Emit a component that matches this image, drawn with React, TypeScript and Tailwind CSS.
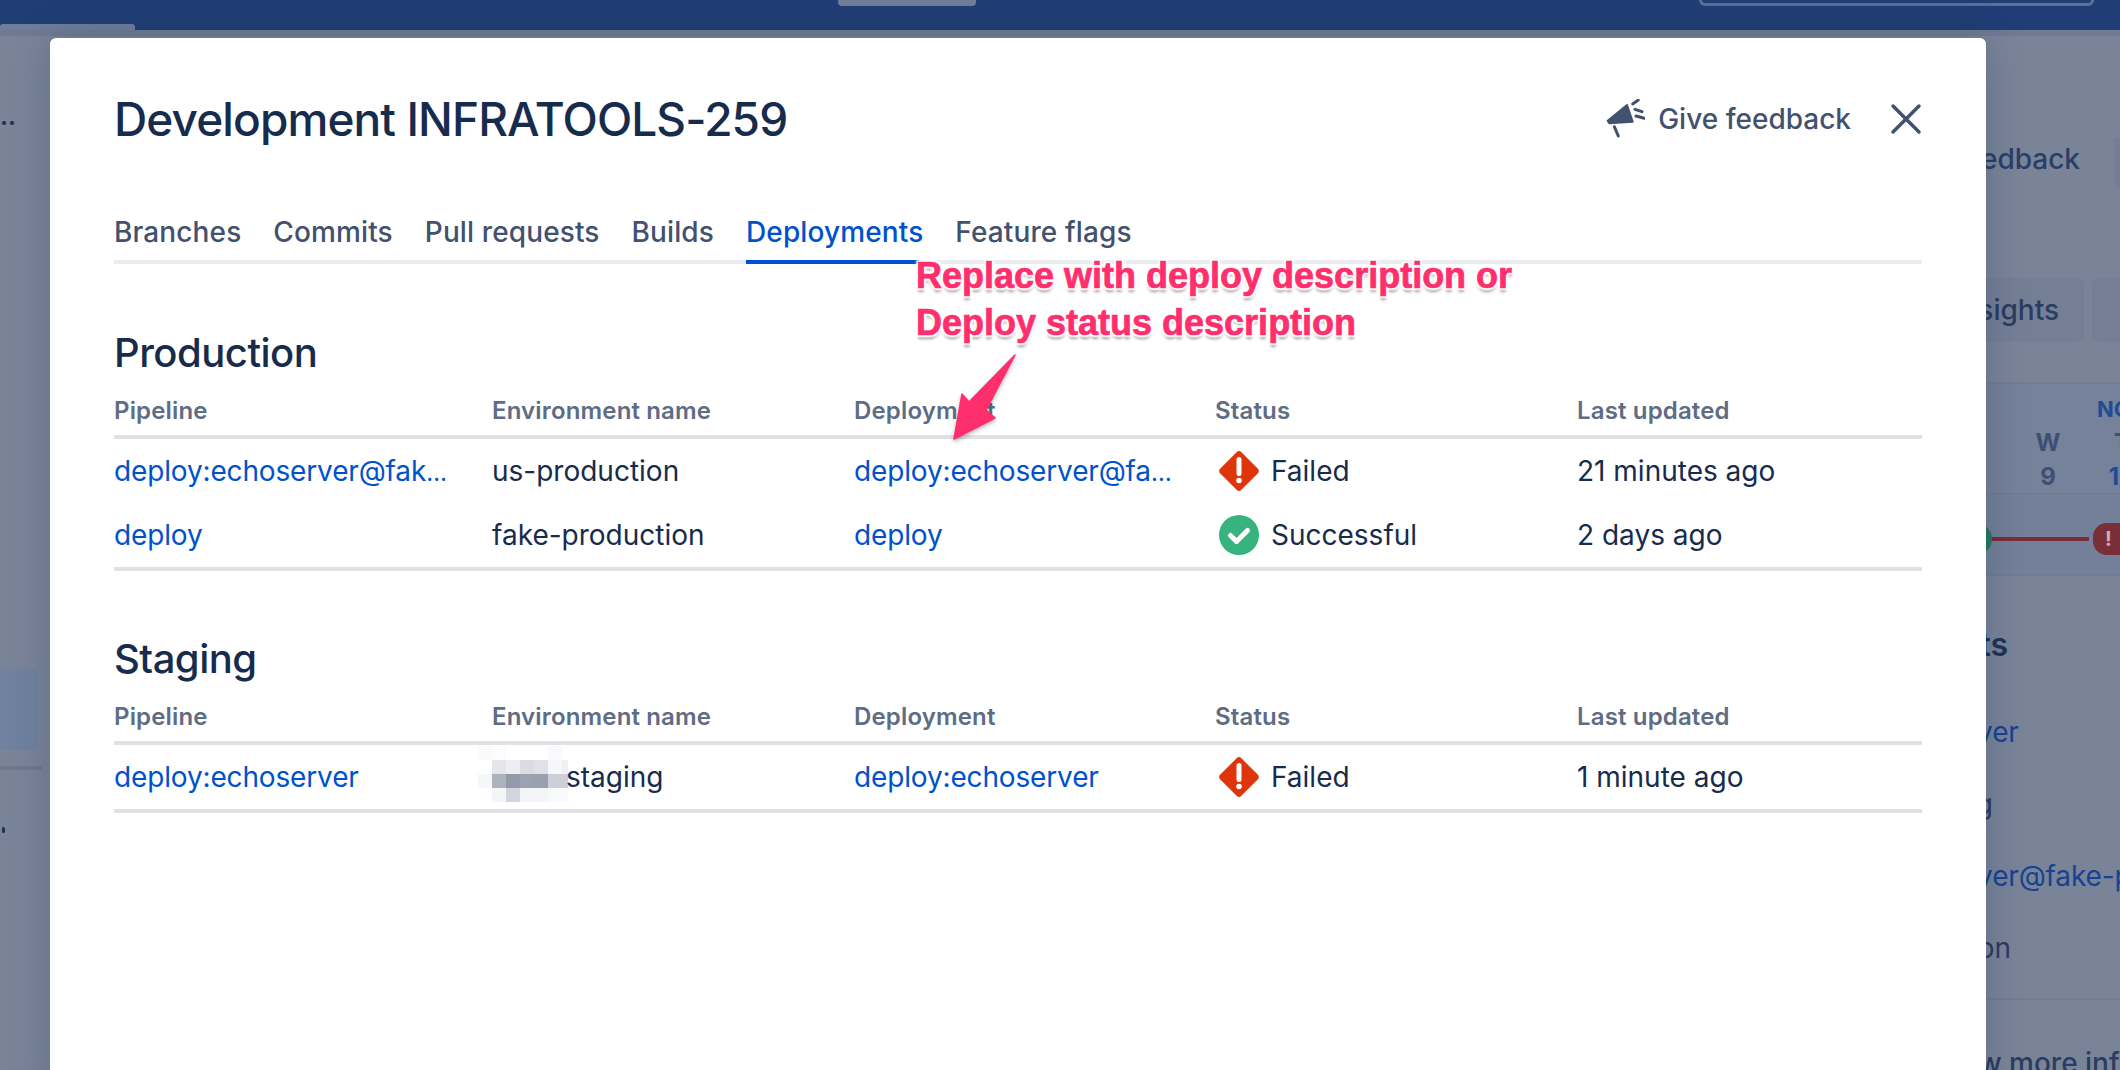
import { X } from "lucide-react"

const font = "font-['Inter','Liberation_Sans',sans-serif]"

const tabs = ["Branches", "Commits", "Pull requests", "Builds", "Deployments", "Feature flags"]

type Row = {
  pipeline: string
  environment: string
  deployment: string
  status: "failed" | "successful"
  updated: string
  blurred?: boolean
}

const production: Row[] = [
  {
    pipeline: "deploy:echoserver@fak…",
    environment: "us-production",
    deployment: "deploy:echoserver@fa…",
    status: "failed",
    updated: "21 minutes ago",
  },
  { pipeline: "deploy", environment: "fake-production", deployment: "deploy", status: "successful", updated: "2 days ago" },
]

const staging: Row[] = [
  {
    pipeline: "deploy:echoserver",
    environment: "staging",
    deployment: "deploy:echoserver",
    status: "failed",
    updated: "1 minute ago",
    blurred: true,
  },
]

// the redacted env prefix, 7 columns by 4 rows of grey pixels
const blurCells = [
  "#fafafb", "#fcfcfd", "#ffffff", "#ffffff", "#ffffff", "#f9f9fb", "#ffffff",
  "#ffffff", "#e4e6ea", "#eceef0", "#d9dce2", "#dfe1e6", "#f6f7f8", "#eff0f3",
  "#f6f7f8", "#adb2bf", "#9499aa", "#9ca2b2", "#9ba0b0", "#cdd0d8", "#cdd0d8",
  "#ffffff", "#f4f5f7", "#d2d5dd", "#f4f5f7", "#f4f5f7", "#f8f9fa", "#f8f9fa",
]

function FailedIcon() {
  return (
    <svg width="40" height="40" viewBox="0 0 40 40">
      <path
        d="M17.6 1.3a3.4 3.4 0 0 1 4.8 0l16.3 16.3a3.4 3.4 0 0 1 0 4.8L22.4 38.7a3.4 3.4 0 0 1-4.8 0L1.3 22.4a3.4 3.4 0 0 1 0-4.8z"
        fill="#de350b"
      />
      <path d="M20 8.5v14" stroke="#fff" strokeWidth="5" strokeLinecap="round" />
      <circle cx="20" cy="29.5" r="2.8" fill="#fff" />
    </svg>
  )
}

function SuccessIcon() {
  return (
    <svg width="40" height="40" viewBox="0 0 40 40">
      <circle cx="20" cy="20" r="20" fill="#36b37e" />
      <path d="M11.5 20.5l6 6 11-11" fill="none" stroke="#fff" strokeWidth="5" strokeLinecap="round" strokeLinejoin="round" />
    </svg>
  )
}

function MegaphoneIcon() {
  return (
    <svg width="40" height="40" viewBox="0 0 40 40" fill="#42526e">
      <path d="M2.7 21.7 L22 6 L27.7 22.7 L4.3 24.3z" stroke="#42526e" strokeWidth="2" strokeLinejoin="round" />
      <path d="M9.3 27.7l4 9.3" stroke="#42526e" strokeWidth="3" strokeLinecap="round" fill="none" />
      <path d="M27.7 5l5.6-4M30 10.3l7 2.4M31 17l8.3 2.3" stroke="#42526e" strokeWidth="3" strokeLinecap="round" fill="none" />
    </svg>
  )
}

// the cut-off links end in a tighter ellipsis than the font's own
function LinkText({ text }: { text: string }) {
  const cut = text.endsWith("…")
  return (
    <div className="whitespace-nowrap tracking-[-0.15px] text-[#0052cc]">
      {cut ? text.slice(0, -1) : text}
      {cut && <span className="text-[24px] leading-[0]">…</span>}
    </div>
  )
}

function DeploymentTable({ title, rows, className }: { title: string; rows: Row[]; className: string }) {
  return (
    <section className={className}>
      <h2 className="text-[40px] font-medium leading-[44px] tracking-[-0.5px] text-[#172b4d]">{title}</h2>
      <div className="mt-[22px] grid h-[42px] grid-cols-[378px_362px_361px_362px_1fr] border-b-4 border-[#dfe1e6] text-[24px] font-semibold leading-[28px] tracking-[0.15px] text-[#5e6c84]">
        <div>Pipeline</div>
        <div>Environment name</div>
        <div>Deployment</div>
        <div>Status</div>
        <div>Last updated</div>
      </div>
      <div className="border-b-4 border-[#dfe1e6]">
        {rows.map((row) => (
          <div
            key={row.pipeline}
            className="grid h-[64px] grid-cols-[378px_362px_361px_362px_1fr] items-center text-[28px] leading-[32px] text-[#172b4d]"
          >
            <LinkText text={row.pipeline} />
            <div className="relative whitespace-nowrap">
              {row.blurred && (
                <div className="absolute -left-[14px] -top-[15px] grid grid-cols-[repeat(6,14px)_6px] grid-rows-[repeat(4,14px)]">
                  {blurCells.map((c, i) => (
                    <div key={i} style={{ backgroundColor: c }} />
                  ))}
                </div>
              )}
              <span className={row.blurred ? "relative ml-[74px]" : ""}>{row.environment}</span>
            </div>
            <LinkText text={row.deployment} />
            <div className="flex items-center gap-[12px]">
              <div className="ml-[4px]">{row.status === "failed" ? <FailedIcon /> : <SuccessIcon />}</div>
              <span>{row.status === "failed" ? "Failed" : "Successful"}</span>
            </div>
            <div className="whitespace-nowrap">{row.updated}</div>
          </div>
        ))}
      </div>
    </section>
  )
}

// annotation text has a white halo under it, as the markup tool draws it
const haloText =
  "[-webkit-text-stroke:0.7px_#ff2e6c] [text-shadow:0_0_2px_#fff,0_0_3px_#fff,2px_2px_2px_#fff,-2px_-2px_2px_#fff,2px_-2px_2px_#fff,-2px_2px_2px_#fff,0_4px_3px_rgba(0,0,0,0.4)]"

export default function App() {
  return (
    <div className={`relative h-[1070px] w-[2120px] overflow-hidden bg-[#7a8499] ${font}`}>
      {/* dimmed page behind the modal */}
      <header className="relative flex h-[30px] bg-[#203e75]">
        <div className="ml-[838px] h-[6px] w-[138px] rounded-b-[4px] bg-[#6f7d99]" />
        <div className="ml-[723px] h-[6px] w-[395px] rounded-b-[6px] border-x-[3px] border-b-[3px] border-[#5b6f97]" />
        <div className="absolute bottom-0 left-0 h-[6px] w-[135px] rounded-t-[3px] bg-[#6f7e9a]" />
      </header>
      <div className="h-[6px] bg-[#6f7b93]" />
      <main className="flex h-[1034px] justify-between">
        <aside className="w-[50px] overflow-hidden text-[#1f3358]">
          <div className="mt-[67px] text-[24px] font-bold leading-[28px]">..</div>
          <div className="mt-[538px] h-[81px] w-[37px] rounded-r-[6px] bg-[#6f82a0]" />
          <div className="mt-[16px] h-[4px] w-[42px] bg-[#6f7a90]" />
          <div className="mt-[57px] ml-[2px] h-[6px] w-[3px] rounded-full bg-[#1f3358]" />
        </aside>
        <aside className="w-[560px] overflow-hidden text-[28px] leading-[32px] text-[#2a3c60]">
          <div className="mt-[102px] flex h-[50px] items-center justify-end gap-[34px]">
            <span className="mb-[8px] whitespace-nowrap font-medium text-[#2a3f68]">Give feedback</span>
            <div className="h-[50px] w-[6px] rounded-l-[4px] bg-[#747f96]" />
          </div>
          <div className="mt-[90px] flex h-[64px] justify-end gap-[8px]">
            <div className="flex w-[140px] items-center justify-end rounded-[6px] bg-[#747f96] pr-[25px]">
              <span className="whitespace-nowrap font-medium">Insights</span>
            </div>
            <div className="w-[28px] rounded-l-[6px] bg-[#747f96]" />
          </div>
          <div className="mt-[40px] h-[113px] border-y-2 border-[#727d93] bg-[#76819a] pt-[11px]">
            <div className="pl-[537px] text-[22px] font-bold leading-[28px] whitespace-nowrap text-[#1f4b97]">NOV</div>
            <div className="mt-[6px] grid grid-cols-[74px_74px] pl-[451px] text-center text-[24px] font-bold leading-[28px] text-[#3d4f73]">
              <div>W</div>
              <div>T</div>
            </div>
            <div className="mt-[6px] grid grid-cols-[74px_74px] pl-[451px] text-center text-[24px] font-bold leading-[28px] text-[#3d4f73]">
              <div>9</div>
              <div className="text-[#1f4b97]">10</div>
            </div>
          </div>
          <div className="flex h-[81px] items-center border-b-2 border-[#727d93] bg-[#74809a] pl-[400px] pt-[8px]">
            <div className="h-[32px] w-[32px] shrink-0 rounded-full bg-[#2a7660]" />
            <div className="h-[4px] w-[97px] shrink-0 bg-[#7a2e37]" />
            <div className="ml-[4px] flex h-[32px] w-[40px] shrink-0 items-center rounded-l-[14px] bg-[#7a2e37] pl-[12px] text-[20px] font-bold text-[#c8b0b4]">!</div>
          </div>
          <div className="mt-[49px] pr-[112px] text-right">
            <span className="whitespace-nowrap text-[32px] font-semibold leading-[40px] text-[#1f3358]">Artifacts</span>
          </div>
          <div className="mt-[51px] whitespace-nowrap pl-[214px] tracking-[-0.15px] text-[#164391]">deploy:echoserver</div>
          <div className="mt-[40px] pr-[127px] text-right">
            <span className="whitespace-nowrap">staging</span>
          </div>
          <div className="mt-[40px] overflow-hidden whitespace-nowrap pl-[214px] tracking-[-0.15px] text-[#164391]">deploy:echoserver@fake-production</div>
          <div className="mt-[40px] pr-[109px] text-right">
            <span className="whitespace-nowrap">production</span>
          </div>
          <div className="mt-[34px] h-[2px] bg-[#727d93]" />
          <div className="mt-[47px] overflow-hidden whitespace-nowrap pl-[367px] font-medium">Show more information</div>
        </aside>
      </main>

      {/* modal */}
      <div className="absolute left-[50px] top-[38px] h-[1060px] w-[1936px] rounded-[6px] bg-white px-[64px] pt-[50px] shadow-[0_0_40px_rgba(9,30,66,0.22)]">
        <div className="flex h-[62px] items-center justify-between">
          <h1 className="text-[46px] font-medium leading-[56px] tracking-[-0.9px] text-[#172b4d]">Development INFRATOOLS-259</h1>
          <div className="-mr-[10px] flex items-center">
            <MegaphoneIcon />
            <span className="ml-[13px] text-[28px] font-medium leading-[32px] text-[#42526e]">Give feedback</span>
            <X className="ml-[29px] h-[52px] w-[52px] text-[#42526e]" strokeWidth={1.6} />
          </div>
        </div>
        <nav className="mt-[66px] flex h-[48px] gap-[32px] border-b-4 border-[#ebecf0] text-[28px] font-medium leading-[32px] tracking-[0.12px] text-[#42526e]">
          {tabs.map((tab) =>
            tab === "Deployments" ? (
              <div key={tab} className="-mb-[4px] h-[48px] border-b-4 border-[#0052cc] text-[#0052cc]">
                {tab}
              </div>
            ) : (
              <div key={tab}>{tab}</div>
            ),
          )}
        </nav>
        <DeploymentTable title="Production" rows={production} className="mt-[67px]" />
        <DeploymentTable title="Staging" rows={staging} className="mt-[66px]" />
      </div>

      {/* markup on top of the screenshot */}
      <div className={`absolute left-[916px] top-[252px] font-['Liberation_Sans',sans-serif] text-[36px] font-bold leading-[47px] text-[#ff2e6c] ${haloText}`}>
        <div>Replace with deploy description or</div>
        <div>Deploy status description</div>
      </div>
      <svg className="absolute left-[945px] top-[350px]" width="80" height="95" viewBox="0 0 80 95">
        <path
          d="M70 5 L24 52 L17 44 L9 89 L50 68 L41 60 z"
          fill="#ff2e6c"
          stroke="#ff2e6c"
          strokeWidth="1.5"
          strokeLinejoin="round"
          style={{ filter: "drop-shadow(0 2px 2px rgba(0,0,0,0.3))" }}
        />
      </svg>
    </div>
  )
}
